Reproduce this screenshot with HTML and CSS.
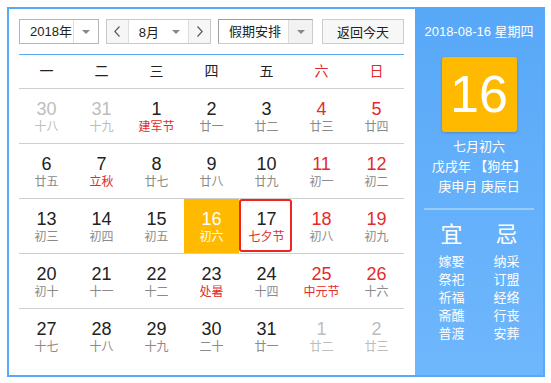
FILE: index.html
```html
<!DOCTYPE html>
<html lang="zh-CN">
<head>
    <meta charset="UTF-8">
    <meta name="viewport" content="width=device-width, initial-scale=1.0">
    <title>万年历</title>
    <link rel="stylesheet" href="styles.css">
</head>
<body>
    <div class="calendar">
        <div class="main">
            <div class="toolbar">
                <div class="select year">
                    <span class="value">2018年</span>
                    <span class="drop"><i class="caret"></i></span>
                </div>
                <div class="month-group">
                    <span class="nav">
                        <svg width="6" height="11" viewBox="0 0 6 11"><polyline points="5.5,0.5 0.8,5.5 5.5,10.5" fill="none" stroke="#555" stroke-width="1.1"/></svg>
                    </span>
                    <span class="month">
                        <span class="value">8月</span>
                        <i class="caret"></i>
                    </span>
                    <span class="nav">
                        <svg width="6" height="11" viewBox="0 0 6 11"><polyline points="0.5,0.5 5.2,5.5 0.5,10.5" fill="none" stroke="#555" stroke-width="1.1"/></svg>
                    </span>
                </div>
                <div class="select holiday">
                    <span class="value">假期安排</span>
                    <span class="drop"><i class="caret"></i></span>
                </div>
                <button class="today-btn">返回今天</button>
            </div>

            <div class="weekdays">
                <span>一</span><span>二</span><span>三</span><span>四</span><span>五</span>
                <span class="red">六</span><span class="red">日</span>
            </div>

            <div class="weeks">
                <div class="week">
                    <div class="day other"><span class="num">30</span><span class="lunar">十八</span></div>
                    <div class="day other"><span class="num">31</span><span class="lunar">十九</span></div>
                    <div class="day festival"><span class="num">1</span><span class="lunar">建军节</span></div>
                    <div class="day"><span class="num">2</span><span class="lunar">廿一</span></div>
                    <div class="day"><span class="num">3</span><span class="lunar">廿二</span></div>
                    <div class="day weekend"><span class="num">4</span><span class="lunar">廿三</span></div>
                    <div class="day weekend"><span class="num">5</span><span class="lunar">廿四</span></div>
                </div>
                <div class="week">
                    <div class="day"><span class="num">6</span><span class="lunar">廿五</span></div>
                    <div class="day festival"><span class="num">7</span><span class="lunar">立秋</span></div>
                    <div class="day"><span class="num">8</span><span class="lunar">廿七</span></div>
                    <div class="day"><span class="num">9</span><span class="lunar">廿八</span></div>
                    <div class="day"><span class="num">10</span><span class="lunar">廿九</span></div>
                    <div class="day weekend"><span class="num">11</span><span class="lunar">初一</span></div>
                    <div class="day weekend"><span class="num">12</span><span class="lunar">初二</span></div>
                </div>
                <div class="week">
                    <div class="day"><span class="num">13</span><span class="lunar">初三</span></div>
                    <div class="day"><span class="num">14</span><span class="lunar">初四</span></div>
                    <div class="day"><span class="num">15</span><span class="lunar">初五</span></div>
                    <div class="day selected"><span class="num">16</span><span class="lunar">初六</span></div>
                    <div class="day festival current"><span class="num">17</span><span class="lunar">七夕节</span></div>
                    <div class="day weekend"><span class="num">18</span><span class="lunar">初八</span></div>
                    <div class="day weekend"><span class="num">19</span><span class="lunar">初九</span></div>
                </div>
                <div class="week">
                    <div class="day"><span class="num">20</span><span class="lunar">初十</span></div>
                    <div class="day"><span class="num">21</span><span class="lunar">十一</span></div>
                    <div class="day"><span class="num">22</span><span class="lunar">十二</span></div>
                    <div class="day festival"><span class="num">23</span><span class="lunar">处暑</span></div>
                    <div class="day"><span class="num">24</span><span class="lunar">十四</span></div>
                    <div class="day weekend festival"><span class="num">25</span><span class="lunar">中元节</span></div>
                    <div class="day weekend"><span class="num">26</span><span class="lunar">十六</span></div>
                </div>
                <div class="week">
                    <div class="day"><span class="num">27</span><span class="lunar">十七</span></div>
                    <div class="day"><span class="num">28</span><span class="lunar">十八</span></div>
                    <div class="day"><span class="num">29</span><span class="lunar">十九</span></div>
                    <div class="day"><span class="num">30</span><span class="lunar">二十</span></div>
                    <div class="day"><span class="num">31</span><span class="lunar">廿一</span></div>
                    <div class="day other"><span class="num">1</span><span class="lunar">廿二</span></div>
                    <div class="day other"><span class="num">2</span><span class="lunar">廿三</span></div>
                </div>
            </div>
        </div>

        <div class="side">
            <div class="side-date">2018-08-16 星期四</div>
            <div class="big-day">16</div>
            <div class="lunar-info">
                <p>七月初六</p>
                <p>戊戌年 【狗年】</p>
                <p>庚申月 庚辰日</p>
            </div>
            <div class="divider"></div>
            <div class="almanac">
                <div class="col">
                    <h3>宜</h3>
                    <p>嫁娶</p><p>祭祀</p><p>祈福</p><p>斋醮</p><p>普渡</p>
                </div>
                <div class="col">
                    <h3>忌</h3>
                    <p>纳采</p><p>订盟</p><p>经络</p><p>行丧</p><p>安葬</p>
                </div>
            </div>
        </div>
    </div>
</body>
</html>
```

FILE: styles.css
```css
body {
    margin: 0;
    padding: 7px;
    background-color: #fff;
    font-family: "Liberation Sans", "Noto Sans CJK SC", sans-serif;
    color: #222;
}

.calendar {
    display: flex;
    width: 534px;
    height: 366px;
    border: 2px solid #5aa9f6;
}

.main {
    width: 385px;
    padding: 10px 11px 0 10px;
}

/* toolbar */

.toolbar {
    display: flex;
    height: 25px;
    font-size: 13px;
}

.select {
    display: flex;
    box-sizing: border-box;
    height: 25px;
    border: 1px solid #b5b5b5;
    background-color: #fff;
}

    .select .value {
        flex: 1;
        padding-left: 10px;
        line-height: 23px;
    }

    .select .drop {
        display: flex;
        align-items: center;
        justify-content: center;
        border-left: 1px solid #ddd;
    }

.caret {
    width: 0;
    height: 0;
    border-left: 4px solid transparent;
    border-right: 4px solid transparent;
    border-top: 4px solid #888;
}

.year {
    width: 80px;
}

    .year .drop {
        width: 24px;
    }

.month-group {
    display: flex;
    box-sizing: border-box;
    width: 105px;
    height: 25px;
    margin-left: 7px;
    border: 1px solid #c8c8c8;
}

    .month-group .nav {
        display: flex;
        align-items: center;
        justify-content: center;
        width: 21px;
        background-color: #f6f6f6;
    }

    .month-group .month {
        display: flex;
        align-items: center;
        width: 60px;
        border-left: 1px solid #ddd;
        border-right: 1px solid #ddd;
    }

        .month-group .month .value {
            flex: 1;
            padding-left: 10px;
        }

        .month-group .month .caret {
            margin-right: 8px;
        }

.holiday {
    width: 95px;
    margin-left: 7px;
    border-color: #a0a0a0 #ccc #ccc #a0a0a0;
}

    .holiday .drop {
        width: 23px;
        background-color: #f2f2f2;
    }

.today-btn {
    box-sizing: border-box;
    width: 82px;
    height: 25px;
    margin-left: 9px;
    padding: 0;
    border: 1px solid #ccc;
    background-color: #f7f7f7;
    font-family: inherit;
    font-size: 13px;
    color: #222;
}

/* grid */

.weekdays {
    display: grid;
    grid-template-columns: repeat(7, 55px);
    margin-top: 10px;
    border-top: 1px solid #5aa9f6;
    border-bottom: 1px solid #cfcfcf;
    height: 33px;
    line-height: 33px;
    font-size: 14px;
    text-align: center;
}

    .weekdays .red {
        color: #e42b2b;
    }

.week {
    display: grid;
    grid-template-columns: repeat(7, 55px);
    height: 54px;
    border-bottom: 1px solid #cfcfcf;
}

    .week:last-child {
        border-bottom: none;
    }

.day {
    position: relative;
    text-align: center;
}

    .day .num {
        display: block;
        margin-top: 10px;
        font-size: 18px;
        line-height: 20px;
    }

    .day .lunar {
        display: block;
        font-size: 12px;
        line-height: 16px;
        color: #8a8a8a;
    }

    .day.weekend .num {
        color: #e42b2b;
    }

    .day.festival .lunar {
        color: #e42b2b;
    }

    .day.other .num,
    .day.other .lunar {
        color: #bdbdbd;
    }

    .day.selected {
        background-color: #ffba00;
    }

        .day.selected .num,
        .day.selected .lunar {
            color: #fff;
        }

    .day.current::after {
        content: "";
        position: absolute;
        top: 0;
        left: 0;
        right: 2px;
        bottom: 1px;
        border: 2px solid #f0251f;
        border-radius: 3px;
    }

/* side panel */

.side {
    width: 128px;
    padding-top: 14px;
    background: linear-gradient(#58a8f8, #6fb7fd);
    color: #fff;
    text-align: center;
}

.side-date {
    font-size: 13px;
    line-height: 18px;
}

.big-day {
    width: 75px;
    height: 75px;
    margin: 16px auto 0;
    background-color: #ffba00;
    border-radius: 3px;
    box-shadow: 0 1px 3px rgba(0, 0, 0, 0.2);
    font-size: 52px;
    line-height: 75px;
}

.lunar-info {
    margin-top: 5px;
    font-size: 13px;
    line-height: 20px;
}

    .lunar-info p {
        margin: 0;
    }

.divider {
    width: 110px;
    height: 2px;
    margin: 11px auto 0;
    background-color: rgba(255, 255, 255, 0.35);
}

.almanac {
    display: flex;
    justify-content: center;
    margin-top: 11px;
}

    .almanac .col {
        width: 55px;
    }

    .almanac h3 {
        margin: 0 0 4px;
        font-size: 22px;
        font-weight: normal;
        line-height: 28px;
    }

    .almanac p {
        margin: 0;
        font-size: 13px;
        line-height: 18px;
    }
```
